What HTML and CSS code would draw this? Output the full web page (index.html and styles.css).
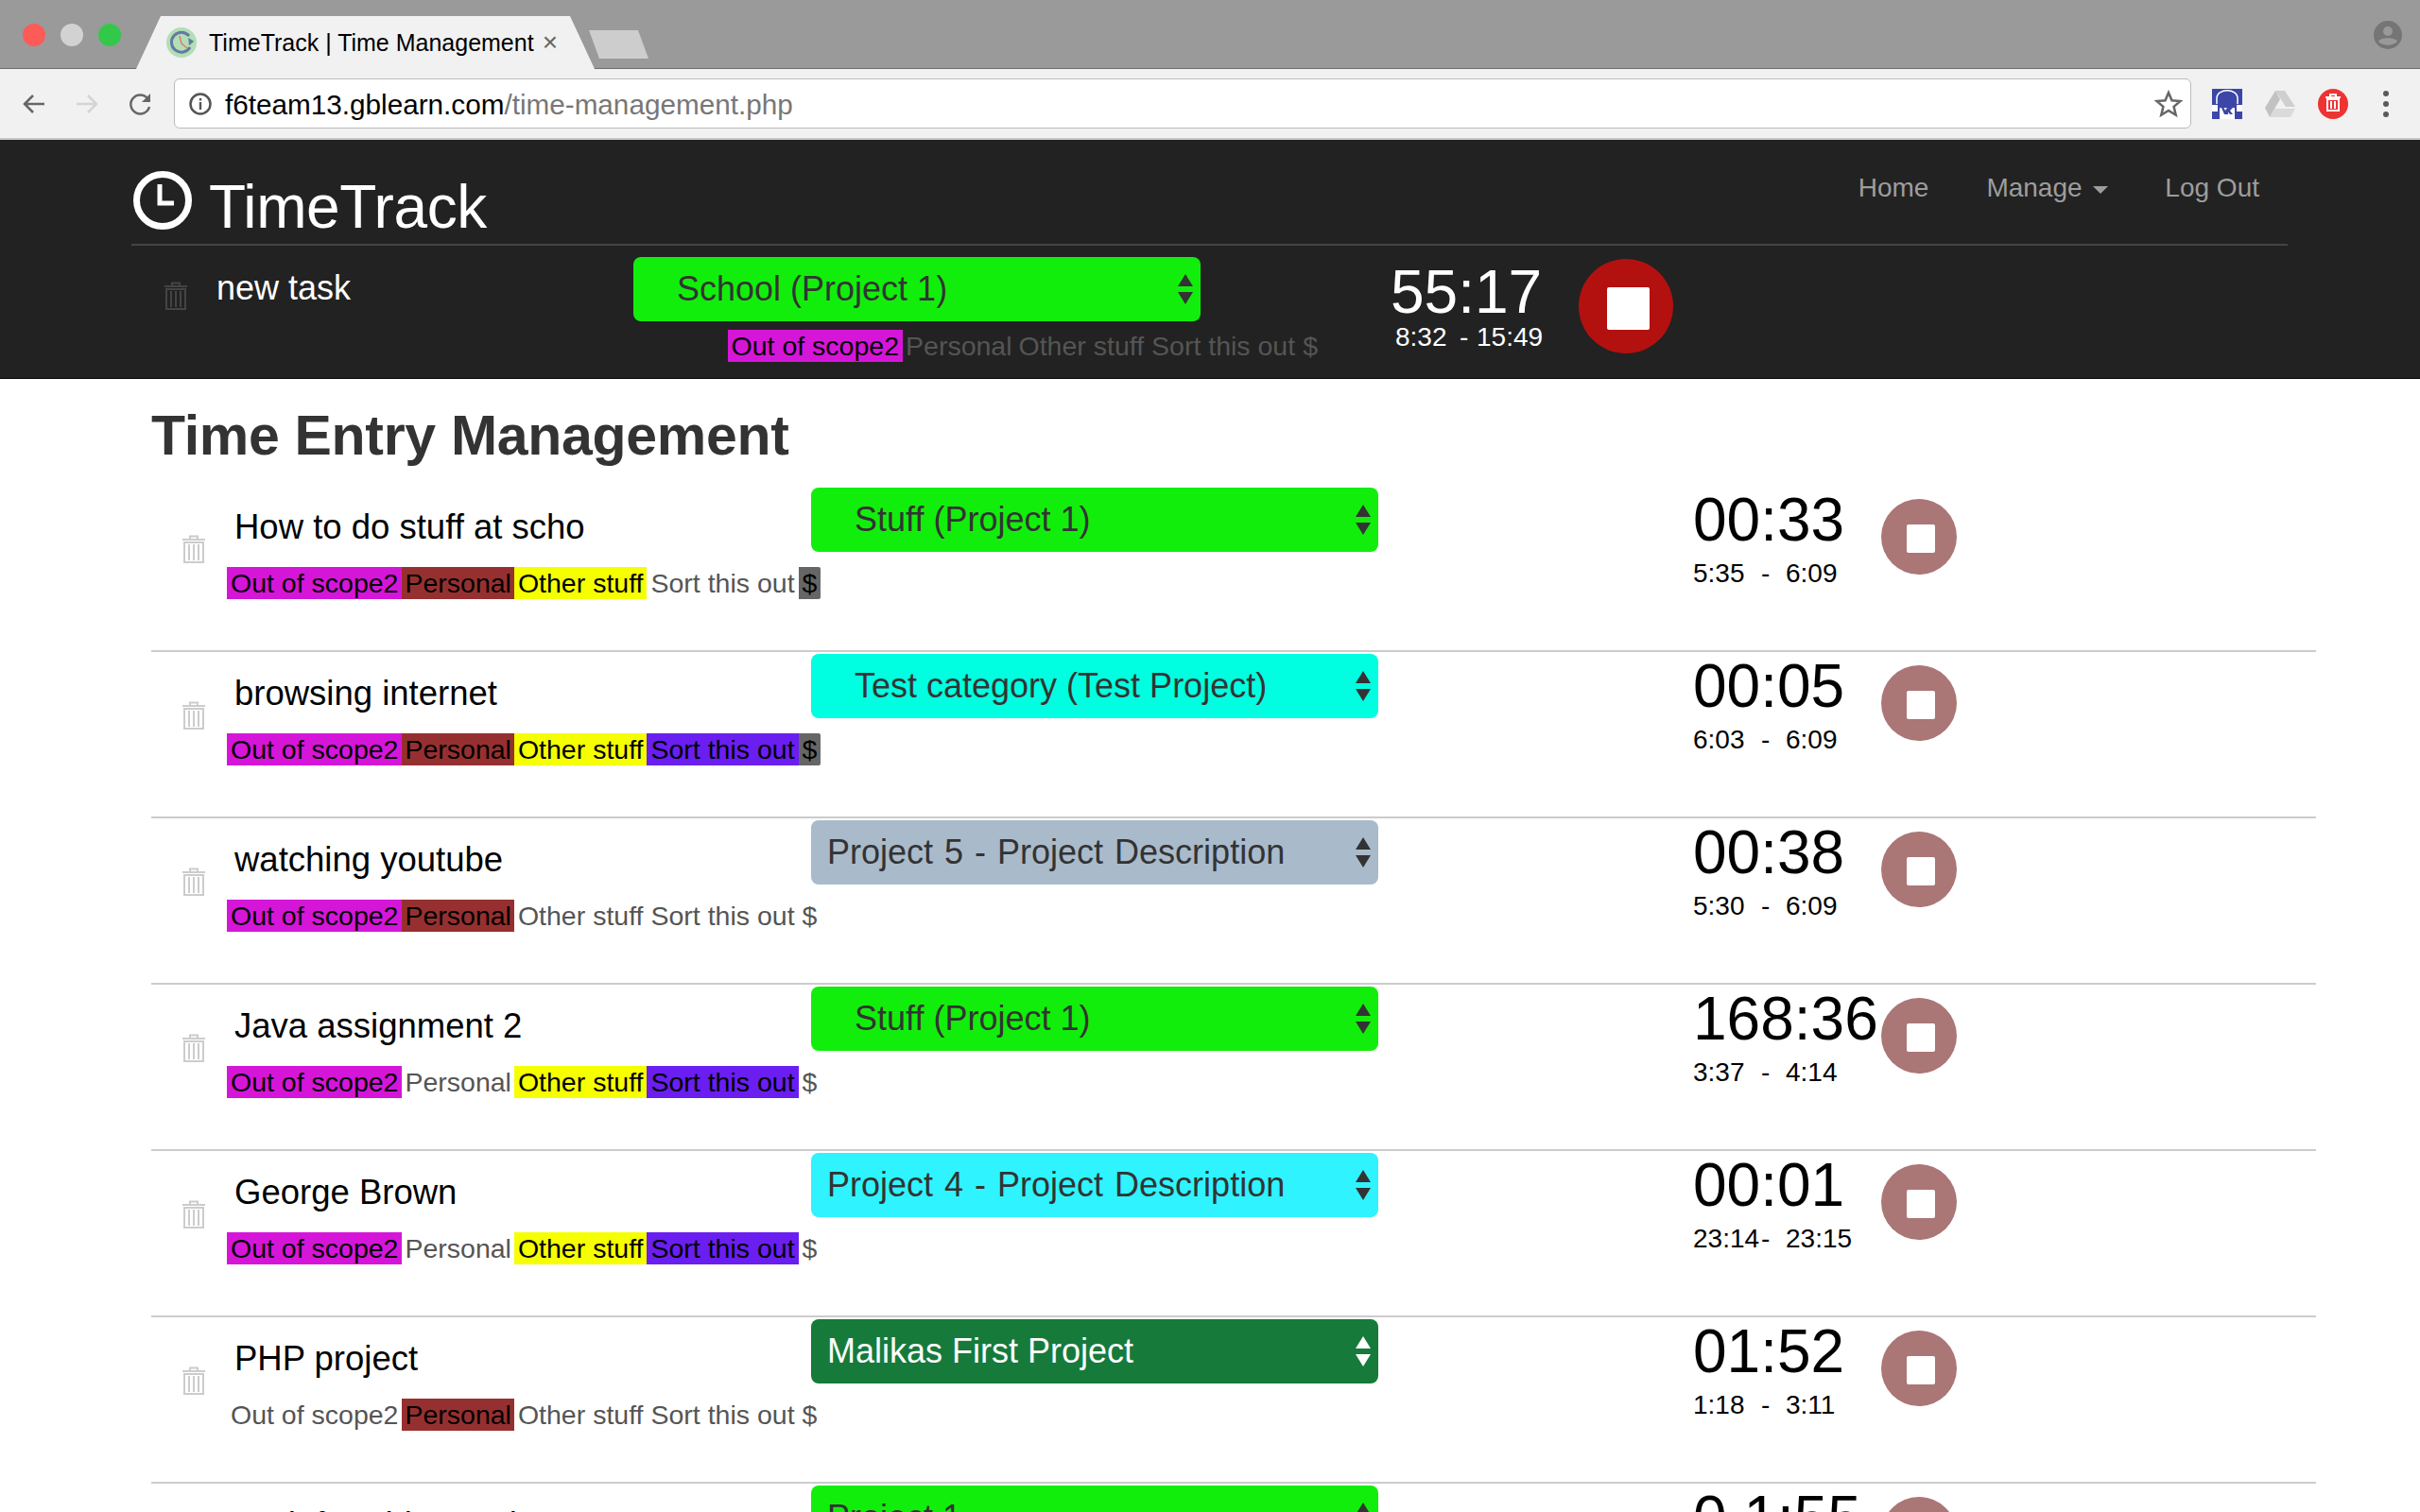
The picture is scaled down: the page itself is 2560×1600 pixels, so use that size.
FILE: index.html
```html
<!DOCTYPE html>
<html lang="en">
<head>
    <meta charset="UTF-8">
    <title>TimeTrack | Time Management</title>
    <link rel="stylesheet" href="styles.css">
</head>
<body>

<svg width="0" height="0" class="defs">
    <symbol id="trash" viewBox="0 0 26 30">
        <path d="M9 4V1.500h8V4M1 5h24M3 8h20v21H3zM8 10v17M13 10v17M18 10v17" fill="none" stroke="currentColor" stroke-width="2"/>
    </symbol>
</svg>

<!-- Browser tabs -->
<div class="tabstrip">
    <div class="lights">
        <span class="light red"></span>
        <span class="light grey"></span>
        <span class="light green"></span>
    </div>
    <div class="tab">
        <svg class="favicon" width="32" height="32" viewBox="0 0 32 32">
            <circle cx="16" cy="16" r="16" fill="#b2dfb4"/>
            <path d="M25 21A10.500 10.500 0 1 1 24 9" fill="none" stroke="#6679a3" stroke-width="3"/>
            <path d="M21 13l7-1-1 7z" fill="#6679a3" transform="rotate(40 25 15)"/>
            <path d="M14 9l2 8 6 5" fill="none" stroke="#e07a7a" stroke-width="1.500"/>
        </svg>
        <span class="tab-title">TimeTrack | Time Management</span>
        <span class="tab-close">×</span>
    </div>
    <div class="newtab"></div>
    <svg class="avatar" width="30" height="30" viewBox="0 0 30 30">
        <circle cx="15" cy="15" r="15" fill="#757575"/>
        <circle cx="15" cy="11" r="5" fill="#999"/>
        <path d="M5 22c2-5 18-5 20 0-5 5-15 5-20 0z" fill="#999"/>
    </svg>
</div>

<!-- Address bar -->
<div class="toolbar">
    <svg class="tool" width="28" height="28" viewBox="0 0 28 28"><path d="M25 14H5M13 5l-9 9 9 9" fill="none" stroke="#666" stroke-width="2.500"/></svg>
    <svg class="tool" width="28" height="28" viewBox="0 0 28 28"><path d="M3 14h20M15 5l9 9-9 9" fill="none" stroke="#d4d4d4" stroke-width="2.500"/></svg>
    <svg class="tool" width="28" height="28" viewBox="0 0 28 28"><path d="M23 17a10 10 0 1 1-2-9" fill="none" stroke="#666" stroke-width="2.500"/><path d="M24 3v9h-9z" fill="#666"/></svg>
    <div class="omnibox">
        <svg width="24" height="24" viewBox="0 0 24 24">
            <circle cx="12" cy="12" r="10.500" fill="none" stroke="#555" stroke-width="2.500"/>
            <path d="M10.800 6h2.400v2.400h-2.400zM10.800 10h2.400v8h-2.400z" fill="#555"/>
        </svg>
        <div class="url">f6team13.gblearn.com<span class="url-path">/time-management.php</span></div>
        <svg width="30" height="30" viewBox="0 0 30 30">
            <path d="M15 3l3.500 8.300 9 .7-6.900 5.900 2.100 8.800-7.700-4.700-7.700 4.700 2.100-8.800-6.900-5.900 9-.7z" fill="none" stroke="#666" stroke-width="2.500"/>
        </svg>
    </div>
    <div class="extensions">
        <svg width="32" height="32" viewBox="0 0 32 32">
            <rect width="32" height="32" fill="#3b46a8"/>
            <path d="M5 16V10C5 -1 27 -1 27 10V16" fill="none" stroke="#fff" stroke-width="1.500"/>
            <path d="M0 17h6v7H0zM26 17h6v7h-6zM8 20h16v12H8z" fill="#fff"/>
            <path d="M10 20h2.500l1.500 3 2-3h6l-3 3 3 4h-3l-2-2.500V27h-4l-3-7z" fill="#3b46a8"/>
        </svg>
        <svg width="32" height="32" viewBox="0 0 32 32">
            <path d="M11 2h10l11 17h-10z" fill="#cfcfcf"/>
            <path d="M11 2l5 9-11 19-5-10z" fill="#c2c2c2"/>
            <path d="M5 30l5-9h22l-5 9z" fill="#dadada"/>
        </svg>
        <svg width="32" height="32" viewBox="0 0 32 32">
            <circle cx="16" cy="16" r="16" fill="#ee3333"/>
            <path d="M13 8V6h6v2M8 9h16M10 11h12v12H10zM14 13v8M18 13v8" fill="none" stroke="#fff" stroke-width="2"/>
        </svg>
        <div class="kebab"><span></span><span></span><span></span></div>
    </div>
</div>

<!-- Navbar -->
<nav class="navbar">
    <div class="nav-inner">
        <div class="nav-top">
            <a class="brand">
                <svg width="62" height="62" viewBox="0 0 62 62">
                    <circle cx="31" cy="31" r="27.500" fill="none" stroke="#fff" stroke-width="7"/>
                    <path d="M28 14v20h15" fill="none" stroke="#fff" stroke-width="5"/>
                </svg>
                <span>TimeTrack</span>
            </a>
            <ul class="nav-links">
                <li>Home</li>
                <li>Manage <span class="caret"></span></li>
                <li>Log Out</li>
            </ul>
        </div>

        <div class="current">
            <div class="current-left">
                <svg class="trash dark"><use href="#trash"/></svg>
                <div class="desc">new task</div>
            </div>
            <div class="current-mid">
                <div class="project c-green indent"><span>School (Project 1)</span><span class="arrows"></span></div>
                <div class="tags dim">
                    <span class="tag t-scope">Out of scope2</span><span class="tag">Personal</span><span class="tag">Other stuff</span><span class="tag">Sort this out</span><span class="tag">$</span>
                </div>
            </div>
            <div class="times">
                <div class="duration">55:17</div>
                <div class="range"><span class="from">8:32</span><span class="dash">-</span><span>15:49</span></div>
            </div>
            <button class="stop"><span></span></button>
        </div>
    </div>
</nav>

<!-- Contenido -->
<div class="container">
    <h1>Time Entry Management</h1>

    <div class="entry">
        <div class="entry-left">
            <svg class="trash"><use href="#trash"/></svg>
            <div class="entry-text">
                <div class="desc">How to do stuff at scho</div>
                <div class="tags">
                    <span class="tag t-scope">Out of scope2</span><span class="tag t-personal">Personal</span><span class="tag t-other">Other stuff</span><span class="tag">Sort this out</span><span class="tag t-money">$</span>
                </div>
            </div>
        </div>
        <div class="project c-green indent"><span>Stuff (Project 1)</span><span class="arrows"></span></div>
        <div class="times">
            <div class="duration">00:33</div>
            <div class="range"><span class="from">5:35</span><span class="dash">-</span><span>6:09</span></div>
        </div>
        <button class="stop"><span></span></button>
    </div>

    <div class="entry">
        <div class="entry-left">
            <svg class="trash"><use href="#trash"/></svg>
            <div class="entry-text">
                <div class="desc">browsing internet</div>
                <div class="tags">
                    <span class="tag t-scope">Out of scope2</span><span class="tag t-personal">Personal</span><span class="tag t-other">Other stuff</span><span class="tag t-sort">Sort this out</span><span class="tag t-money">$</span>
                </div>
            </div>
        </div>
        <div class="project c-teal indent"><span>Test category (Test Project)</span><span class="arrows"></span></div>
        <div class="times">
            <div class="duration">00:05</div>
            <div class="range"><span class="from">6:03</span><span class="dash">-</span><span>6:09</span></div>
        </div>
        <button class="stop"><span></span></button>
    </div>

    <div class="entry">
        <div class="entry-left">
            <svg class="trash"><use href="#trash"/></svg>
            <div class="entry-text">
                <div class="desc">watching youtube</div>
                <div class="tags">
                    <span class="tag t-scope">Out of scope2</span><span class="tag t-personal">Personal</span><span class="tag">Other stuff</span><span class="tag">Sort this out</span><span class="tag">$</span>
                </div>
            </div>
        </div>
        <div class="project c-slate"><span>Project 5 - Project Description</span><span class="arrows"></span></div>
        <div class="times">
            <div class="duration">00:38</div>
            <div class="range"><span class="from">5:30</span><span class="dash">-</span><span>6:09</span></div>
        </div>
        <button class="stop"><span></span></button>
    </div>

    <div class="entry">
        <div class="entry-left">
            <svg class="trash"><use href="#trash"/></svg>
            <div class="entry-text">
                <div class="desc">Java assignment 2</div>
                <div class="tags">
                    <span class="tag t-scope">Out of scope2</span><span class="tag">Personal</span><span class="tag t-other">Other stuff</span><span class="tag t-sort">Sort this out</span><span class="tag">$</span>
                </div>
            </div>
        </div>
        <div class="project c-green indent"><span>Stuff (Project 1)</span><span class="arrows"></span></div>
        <div class="times">
            <div class="duration">168:36</div>
            <div class="range"><span class="from">3:37</span><span class="dash">-</span><span>4:14</span></div>
        </div>
        <button class="stop"><span></span></button>
    </div>

    <div class="entry">
        <div class="entry-left">
            <svg class="trash"><use href="#trash"/></svg>
            <div class="entry-text">
                <div class="desc">George Brown</div>
                <div class="tags">
                    <span class="tag t-scope">Out of scope2</span><span class="tag">Personal</span><span class="tag t-other">Other stuff</span><span class="tag t-sort">Sort this out</span><span class="tag">$</span>
                </div>
            </div>
        </div>
        <div class="project c-sky"><span>Project 4 - Project Description</span><span class="arrows"></span></div>
        <div class="times">
            <div class="duration">00:01</div>
            <div class="range"><span class="from">23:14</span><span class="dash">-</span><span>23:15</span></div>
        </div>
        <button class="stop"><span></span></button>
    </div>

    <div class="entry">
        <div class="entry-left">
            <svg class="trash"><use href="#trash"/></svg>
            <div class="entry-text">
                <div class="desc">PHP project</div>
                <div class="tags">
                    <span class="tag">Out of scope2</span><span class="tag t-personal">Personal</span><span class="tag">Other stuff</span><span class="tag">Sort this out</span><span class="tag">$</span>
                </div>
            </div>
        </div>
        <div class="project c-forest"><span>Malikas First Project</span><span class="arrows"></span></div>
        <div class="times">
            <div class="duration">01:52</div>
            <div class="range"><span class="from">1:18</span><span class="dash">-</span><span>3:11</span></div>
        </div>
        <button class="stop"><span></span></button>
    </div>

    <div class="entry">
        <div class="entry-left">
            <svg class="trash"><use href="#trash"/></svg>
            <div class="entry-text">
                <div class="desc">Task for This Week</div>
            </div>
        </div>
        <div class="project c-green"><span>Project 1</span><span class="arrows"></span></div>
        <div class="times">
            <div class="duration">0 1:55</div>
        </div>
        <button class="stop"><span></span></button>
    </div>
</div>

</body>
</html>
```

FILE: styles.css
```css
html, body {
    height: 1600px;
    overflow: hidden;
}

body {
    font-family: "Liberation Sans", Arial, sans-serif;
    font-size: 28px;
    color: #000;
    background-color: #fff;
    margin: 0;
}

.defs {
    display: block;
    height: 0;
}

/* Pestañas del navegador */
.tabstrip {
    display: flex;
    align-items: flex-end;
    height: 72px;
    background-color: #9a9a9a;
    border-bottom: 1px solid #6f6f6f;
}

.lights {
    display: flex;
    gap: 16px;
    width: 120px;
    padding: 0 0 23px 24px;
}

.light {
    width: 24px;
    height: 24px;
    border-radius: 50%;
}

.light.red { background-color: #fc5b57; }
.light.grey { background-color: #d2d2d2; }
.light.green { background-color: #34c84a; }

.tab {
    display: flex;
    align-items: center;
    width: 485px;
    height: 56px;
    margin-bottom: -1px;
    box-sizing: border-box;
    padding: 0 0 0 32px;
    background-color: #f1f1f1;
    clip-path: polygon(0 100%, 26px 0, 459px 0, 100% 100%);
}

.favicon {
    margin-right: 13px;
}

.tab-title {
    font-size: 25px;
    white-space: nowrap;
}

.tab-close {
    margin-left: 9px;
    font-size: 28px;
    color: #666;
}

.newtab {
    width: 63px;
    height: 30px;
    margin: 0 0 10px -6px;
    background-color: #cdcdcd;
    clip-path: polygon(0 0, 52px 0, 100% 100%, 11px 100%);
}

.avatar {
    margin: 0 19px 20px auto;
}

/* Barra de direcciones */
.toolbar {
    display: flex;
    align-items: center;
    height: 75px;
    box-sizing: border-box;
    padding-left: 22px;
    background-color: #f1f1f1;
    border-bottom: 2px solid #c8c8c8;
}

.tool {
    margin-right: 28px;
}

.tool:nth-child(3) {
    margin-left: 1px;
}

.omnibox {
    display: flex;
    align-items: center;
    gap: 14px;
    width: 2134px;
    height: 53px;
    box-sizing: border-box;
    margin-left: -7px;
    padding: 0 8px 0 15px;
    background-color: #fff;
    border: 1px solid #bbb;
    border-radius: 6px;
}

.url {
    flex: 1;
    padding-top: 2px;
    font-size: 29.700px;
    white-space: nowrap;
}

.url-path {
    color: #777;
}

.extensions {
    display: flex;
    align-items: center;
    gap: 24px;
    margin-left: 22px;
}

.kebab {
    display: flex;
    flex-direction: column;
    gap: 5px;
    margin-left: 13px;
}

.kebab span {
    width: 6px;
    height: 6px;
    border-radius: 50%;
    background-color: #5a5a5a;
}

/* Barra de navegación */
.navbar {
    height: 252px;
    background-color: #222;
    border-bottom: 1px solid #080808;
}

.nav-inner {
    width: 2281px;
    margin-left: 139px;
}

.nav-top {
    display: flex;
    justify-content: space-between;
    height: 112px;
    box-sizing: border-box;
    border-bottom: 2px solid #444;
}

.brand {
    display: flex;
    align-items: flex-start;
    gap: 18px;
    padding: 33px 0 0 2px;
    color: #fff;
}

.brand span {
    padding-top: 1px;
    font-size: 64px;
    line-height: 74px;
    letter-spacing: -0.400px;
}

.nav-links {
    display: flex;
    gap: 60px;
    list-style: none;
    margin: 35px 30px 0 0;
    padding: 0;
    color: #9d9d9d;
}

.nav-links li:first-child {
    margin-right: 1px;
}

.caret {
    display: inline-block;
    margin-left: 4px;
    vertical-align: middle;
    border-top: 8px solid #9d9d9d;
    border-left: 8px solid transparent;
    border-right: 8px solid transparent;
}

.current {
    display: flex;
    align-items: flex-start;
    padding-top: 12px;
}

.current-left {
    display: flex;
    width: 531px;
    box-sizing: border-box;
    padding-left: 34px;
    color: #fff;
}

.current-left .desc {
    margin-left: 30px;
    padding-top: 12px;
    font-size: 36px;
    line-height: 42px;
}

.current-mid {
    display: flex;
    flex-direction: column;
    align-items: flex-end;
    gap: 9px;
    width: 728px;
}

.current-mid .project {
    align-self: flex-start;
}

.current-mid .tags {
    margin: 0;
}

.dim {
    color: #555;
}

.current .times {
    width: 199px;
    margin: 0 0 0 73px;
    padding-top: 2px;
    color: #fff;
}

.current .range {
    margin-top: -3px;
    padding-left: 5px;
}

.current .from { width: 68px; }
.current .dash { width: 18px; }

.current .stop {
    width: 100px;
    height: 100px;
    background-color: #b3110f;
    margin: 2px 0 0 0;
}

.current .stop span {
    width: 45px;
    height: 45px;
}

/* Contenido */
.container {
    margin-left: 160px;
    width: 2290px;
}

h1 {
    font-size: 59px;
    font-weight: bold;
    line-height: 66px;
    letter-spacing: -0.300px;
    color: #333;
    margin: 0;
    padding: 27px 0 20px;
}

.entry {
    display: flex;
    align-items: flex-start;
    height: 172px;
    padding-top: 2px;
    border-bottom: 2px solid #ccc;
}

.entry-left {
    display: flex;
    width: 698px;
    box-sizing: border-box;
    padding-left: 32px;
}

.trash {
    flex: none;
    width: 26px;
    height: 30px;
    margin-top: 50px;
    color: #ccc;
}

.trash.dark {
    margin-top: 26px;
    color: #444;
}

.entry-text {
    margin-left: 22px;
}

.desc {
    font-size: 36.500px;
    line-height: 42px;
    white-space: nowrap;
}

.entry-text .desc {
    padding: 21px 0 0 8px;
}

.tags {
    display: flex;
    margin-top: 21px;
    font-size: 28.500px;
    white-space: nowrap;
    color: #555;
}

.tag {
    padding: 0 4px;
    height: 34px;
    line-height: 34px;
}

.tag:nth-child(2) {
    padding: 0 3px;
}

.t-scope { background-color: #d516d9; color: #000; }
.t-personal { background-color: #963030; color: #000; }
.t-other { background-color: #f5ff00; color: #000; }
.t-sort { background-color: #6a1ef0; color: #000; }
.t-money { background-color: #666; color: #000; border-radius: 0 2px 2px 0; }

.project {
    display: flex;
    align-items: center;
    justify-content: space-between;
    width: 600px;
    height: 68px;
    box-sizing: border-box;
    padding: 0 8px 0 17px;
    border-radius: 8px;
    font-size: 36px;
    color: #333;
    white-space: nowrap;
}

.project.indent {
    padding-left: 46px;
}

.c-green { background-color: #12ee0c; }
.c-teal { background-color: #00ffe0; }
.c-slate { background-color: #a9bacb; word-spacing: 2px; }
.c-sky { background-color: #2ff3ff; word-spacing: 2px; }
.c-forest { background-color: #167a3b; color: #fff; }

.arrows {
    display: flex;
    flex-direction: column;
    gap: 6px;
}

.arrows::before,
.arrows::after {
    content: "";
    border-left: 8px solid transparent;
    border-right: 8px solid transparent;
}

.arrows::before {
    border-bottom: 13px solid currentColor;
}

.arrows::after {
    border-top: 13px solid currentColor;
}

.times {
    width: 199px;
    margin: -1px 0 0 333px;
}

.duration {
    font-size: 64px;
    line-height: 70px;
    white-space: nowrap;
}

.range {
    display: flex;
    margin-top: 6px;
    line-height: 32px;
    white-space: nowrap;
}

.from { width: 72px; }
.dash { width: 26px; }

.stop {
    display: flex;
    align-items: center;
    justify-content: center;
    width: 80px;
    height: 80px;
    margin-top: 12px;
    padding: 4px 0 0 4px;
    border: none;
    border-radius: 50%;
    background-color: #ab7676;
}

.stop span {
    display: block;
    width: 30px;
    height: 30px;
    background-color: #fff;
    border-radius: 2px;
}
```
